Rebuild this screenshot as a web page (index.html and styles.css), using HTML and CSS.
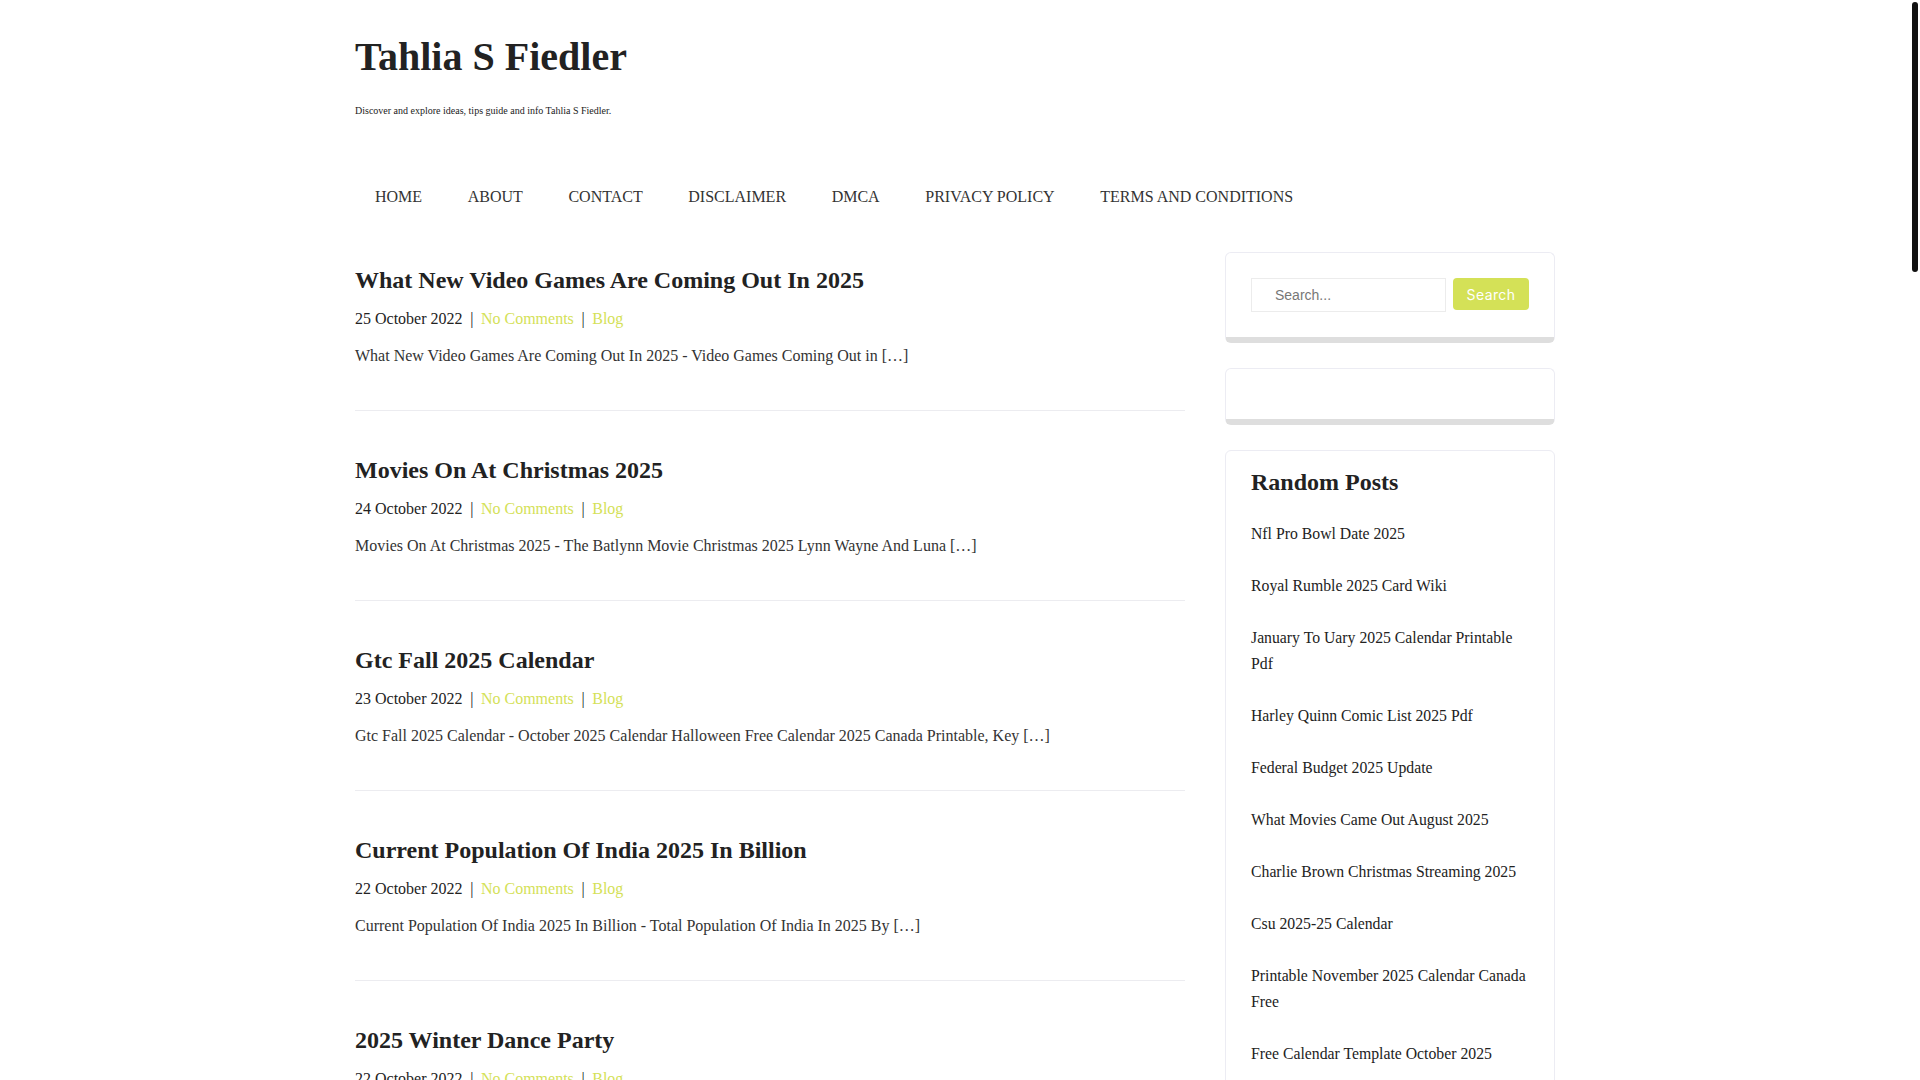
FILE: index.html
```html
<!DOCTYPE html>
<html lang="en">
<head>
    <meta charset="UTF-8">
    <meta name="viewport" content="width=device-width, initial-scale=1.0">
    <title>Tahlia S Fiedler</title>
    <link rel="stylesheet" href="styles.css">
</head>
<body>
    <div class="scroll-thumb"></div>
    <div class="wrap">
        <header class="site-header">
            <h1 class="site-title"><a href="#">Tahlia S Fiedler</a></h1>
            <p class="site-desc">Discover and explore ideas, tips guide and info Tahlia S Fiedler.</p>
            <nav class="menu">
                <ul>
                    <li><a href="#">HOME</a></li>
                    <li><a href="#">ABOUT</a></li>
                    <li><a href="#">CONTACT</a></li>
                    <li><a href="#">DISCLAIMER</a></li>
                    <li><a href="#">DMCA</a></li>
                    <li><a href="#">PRIVACY POLICY</a></li>
                    <li><a href="#">TERMS AND CONDITIONS</a></li>
                </ul>
            </nav>
        </header>

        <div class="content">
            <main class="posts">
                <article class="post">
                    <h2><a href="#">What New Video Games Are Coming Out In 2025</a></h2>
                    <div class="meta">25 October 2022<span class="sep">|</span><a href="#">No Comments</a><span class="sep">|</span><a href="#">Blog</a></div>
                    <p>What New Video Games Are Coming Out In 2025 - Video Games Coming Out in […]</p>
                </article>
                <article class="post">
                    <h2><a href="#">Movies On At Christmas 2025</a></h2>
                    <div class="meta">24 October 2022<span class="sep">|</span><a href="#">No Comments</a><span class="sep">|</span><a href="#">Blog</a></div>
                    <p>Movies On At Christmas 2025 - The Batlynn Movie Christmas 2025 Lynn Wayne And Luna […]</p>
                </article>
                <article class="post">
                    <h2><a href="#">Gtc Fall 2025 Calendar</a></h2>
                    <div class="meta">23 October 2022<span class="sep">|</span><a href="#">No Comments</a><span class="sep">|</span><a href="#">Blog</a></div>
                    <p>Gtc Fall 2025 Calendar - October 2025 Calendar Halloween Free Calendar 2025 Canada Printable, Key […]</p>
                </article>
                <article class="post">
                    <h2><a href="#">Current Population Of India 2025 In Billion</a></h2>
                    <div class="meta">22 October 2022<span class="sep">|</span><a href="#">No Comments</a><span class="sep">|</span><a href="#">Blog</a></div>
                    <p>Current Population Of India 2025 In Billion - Total Population Of India In 2025 By […]</p>
                </article>
                <article class="post">
                    <h2><a href="#">2025 Winter Dance Party</a></h2>
                    <div class="meta">22 October 2022<span class="sep">|</span><a href="#">No Comments</a><span class="sep">|</span><a href="#">Blog</a></div>
                    <p>2025 Winter Dance Party - Winter Dance Party 2025 Tickets And Tour Dates […]</p>
                </article>
                <article class="post">
                    <h2><a href="#">Nfl Pro Bowl Date 2025</a></h2>
                    <div class="meta">21 October 2022<span class="sep">|</span><a href="#">No Comments</a><span class="sep">|</span><a href="#">Blog</a></div>
                    <p>Nfl Pro Bowl Date 2025 - Pro Bowl 2025 Date, Time And Location […]</p>
                </article>
                <article class="post">
                    <h2><a href="#">Royal Rumble 2025 Card Wiki</a></h2>
                    <div class="meta">21 October 2022<span class="sep">|</span><a href="#">No Comments</a><span class="sep">|</span><a href="#">Blog</a></div>
                    <p>Royal Rumble 2025 Card Wiki - Royal Rumble 2025 Match Card And Results […]</p>
                </article>
                <article class="post">
                    <h2><a href="#">Federal Budget 2025 Update</a></h2>
                    <div class="meta">20 October 2022<span class="sep">|</span><a href="#">No Comments</a><span class="sep">|</span><a href="#">Blog</a></div>
                    <p>Federal Budget 2025 Update - Budget 2025 What You Need To Know […]</p>
                </article>
                <article class="post">
                    <h2><a href="#">What Movies Came Out August 2025</a></h2>
                    <div class="meta">20 October 2022<span class="sep">|</span><a href="#">No Comments</a><span class="sep">|</span><a href="#">Blog</a></div>
                    <p>What Movies Came Out August 2025 - New Movies August 2025 Release Dates […]</p>
                </article>
                <article class="post">
                    <h2><a href="#">Charlie Brown Christmas Streaming 2025</a></h2>
                    <div class="meta">19 October 2022<span class="sep">|</span><a href="#">No Comments</a><span class="sep">|</span><a href="#">Blog</a></div>
                    <p>Charlie Brown Christmas Streaming 2025 - Where To Watch A Charlie Brown Christmas […]</p>
                </article>
                <article class="post">
                    <h2><a href="#">Csu 2025-25 Calendar</a></h2>
                    <div class="meta">19 October 2022<span class="sep">|</span><a href="#">No Comments</a><span class="sep">|</span><a href="#">Blog</a></div>
                    <p>Csu 2025-25 Calendar - Academic Calendar 2025 Csu Important Dates […]</p>
                </article>
                <article class="post">
                    <h2><a href="#">Printable November 2025 Calendar Canada Free</a></h2>
                    <div class="meta">18 October 2022<span class="sep">|</span><a href="#">No Comments</a><span class="sep">|</span><a href="#">Blog</a></div>
                    <p>Printable November 2025 Calendar Canada Free - November 2025 Calendar With Holidays […]</p>
                </article>
                <article class="post">
                    <h2><a href="#">Free Calendar Template October 2025</a></h2>
                    <div class="meta">18 October 2022<span class="sep">|</span><a href="#">No Comments</a><span class="sep">|</span><a href="#">Blog</a></div>
                    <p>Free Calendar Template October 2025 - October 2025 Calendar Printable Template […]</p>
                </article>
                <article class="post">
                    <h2><a href="#">Harley Quinn Comic List 2025 Pdf</a></h2>
                    <div class="meta">17 October 2022<span class="sep">|</span><a href="#">No Comments</a><span class="sep">|</span><a href="#">Blog</a></div>
                    <p>Harley Quinn Comic List 2025 Pdf - Harley Quinn Comics Reading Order […]</p>
                </article>
                <article class="post">
                    <h2><a href="#">January To Uary 2025 Calendar Printable Pdf</a></h2>
                    <div class="meta">17 October 2022<span class="sep">|</span><a href="#">No Comments</a><span class="sep">|</span><a href="#">Blog</a></div>
                    <p>January To Uary 2025 Calendar Printable Pdf - Printable Calendar 2025 Monthly […]</p>
                </article>
                <article class="post">
                    <h2><a href="#">Best Family Cars 2025</a></h2>
                    <div class="meta">16 October 2022<span class="sep">|</span><a href="#">No Comments</a><span class="sep">|</span><a href="#">Blog</a></div>
                    <p>Best Family Cars 2025 - Top Family Cars For 2025 Reviewed […]</p>
                </article>
                <article class="post">
                    <h2><a href="#">Easter Sunday 2025 Date</a></h2>
                    <div class="meta">16 October 2022<span class="sep">|</span><a href="#">No Comments</a><span class="sep">|</span><a href="#">Blog</a></div>
                    <p>Easter Sunday 2025 Date - When Is Easter 2025 Calendar […]</p>
                </article>
                <article class="post">
                    <h2><a href="#">Super Bowl 2025 Halftime Show</a></h2>
                    <div class="meta">15 October 2022<span class="sep">|</span><a href="#">No Comments</a><span class="sep">|</span><a href="#">Blog</a></div>
                    <p>Super Bowl 2025 Halftime Show - Halftime Show Performers 2025 […]</p>
                </article>
                <article class="post">
                    <h2><a href="#">School Holidays 2025 Calendar</a></h2>
                    <div class="meta">15 October 2022<span class="sep">|</span><a href="#">No Comments</a><span class="sep">|</span><a href="#">Blog</a></div>
                    <p>School Holidays 2025 Calendar - School Term Dates 2025 Printable […]</p>
                </article>
                <article class="post">
                    <h2><a href="#">Lunar New Year 2025 Animal</a></h2>
                    <div class="meta">14 October 2022<span class="sep">|</span><a href="#">No Comments</a><span class="sep">|</span><a href="#">Blog</a></div>
                    <p>Lunar New Year 2025 Animal - Year Of The Snake 2025 Meaning […]</p>
                </article>

                <div class="pager">
                    <a href="#" class="current">1</a>
                    <a href="#">2</a>
                    <a href="#">3</a>
                    <a href="#">Next</a>
                </div>
            </main>

            <aside class="sidebar">
                <div class="widget">
                    <form class="search">
                        <input type="text" placeholder="Search...">
                        <button type="button">Search</button>
                    </form>
                </div>
                <div class="widget"></div>
                <div class="widget random">
                    <h3>Random Posts</h3>
                    <ul>
                        <li><a href="#">Nfl Pro Bowl Date 2025</a></li>
                        <li><a href="#">Royal Rumble 2025 Card Wiki</a></li>
                        <li><a href="#">January To Uary 2025 Calendar Printable Pdf</a></li>
                        <li><a href="#">Harley Quinn Comic List 2025 Pdf</a></li>
                        <li><a href="#">Federal Budget 2025 Update</a></li>
                        <li><a href="#">What Movies Came Out August 2025</a></li>
                        <li><a href="#">Charlie Brown Christmas Streaming 2025</a></li>
                        <li><a href="#">Csu 2025-25 Calendar</a></li>
                        <li><a href="#">Printable November 2025 Calendar Canada Free</a></li>
                        <li><a href="#">Free Calendar Template October 2025</a></li>
                    </ul>
                </div>
            </aside>
        </div>
    </div>

    <footer class="site-footer">
        <p>Copyright &copy; 2022 Tahlia S Fiedler. All rights reserved.</p>
    </footer>
</body>
</html>
```

FILE: styles.css
```css
*{
    padding: 0;
    margin: 0;
    box-sizing: border-box;
}
body{
    font-family: "Liberation Serif", "Times New Roman", serif;
    font-size: 16px;
    color: #222;
    background: #fff;
    padding-right: 10px;
}
/* page scroll indicator */
.scroll-thumb{
    position: fixed;
    top: 2px;
    right: 2px;
    width: 6px;
    height: 270px;
    border-radius: 3px;
    background: #111;
}
a{
    color: inherit;
    text-decoration: none;
}
ul{
    list-style: none;
}
.wrap{
    width: 1200px;
    margin: 0 auto;
}
.site-header{
    padding-top: 33px;
}
.site-title{
    font-size: 40px;
    line-height: 48px;
    font-weight: bold;
    color: #222;
}
.site-desc{
    margin-top: 22px;
    font-size: 10px;
    line-height: 15px;
    color: #222;
}
.menu{
    margin-top: 67px;
}
.menu ul{
    display: flex;
    gap: 5.6px;
}
.menu li a{
    display: block;
    padding: 0 20px;
    line-height: 24px;
    color: #333;
}
.content{
    display: flex;
    gap: 40px;
    margin-top: 43px;
}
.posts{
    flex: 1;
}
.post{
    padding: 13px 0 42px;
    border-bottom: 1px solid #ececf0;
    margin-bottom: 31px;
}
.post h2{
    font-size: 24px;
    line-height: 30px;
    font-weight: bold;
    color: #222;
}
.post .meta{
    margin-top: 12px;
    line-height: 24px;
    color: #222;
}
.post .meta a{
    color: #d4e157;
}
.post .meta .sep{
    margin: 0 7.6px;
}
.post p{
    margin-top: 13px;
    line-height: 24px;
    color: #333;
}
.pager{
    display: flex;
    gap: 8px;
    padding: 10px 0 40px;
}
.pager a{
    padding: 6px 12px;
    border: 1px solid #ececf0;
    border-radius: 4px;
}
.pager .current{
    background: #d4e157;
    color: #fff;
}
.sidebar{
    width: 330px;
}
.widget{
    min-height: 57px;
    padding: 25px;
    border: 1px solid #ececf3;
    border-bottom: 6px solid #dedede;
    border-radius: 6px;
    margin-bottom: 25px;
}
.search{
    display: flex;
    align-items: flex-start;
    gap: 7px;
}
.search input{
    width: 195px;
    height: 34px;
    padding-left: 23px;
    border: 1px solid #ececec;
    font-family: "Liberation Sans", Arial, sans-serif;
    font-size: 14px;
    color: #333;
    outline: none;
}
.search input::placeholder{
    color: #777;
}
.search button{
    width: 76px;
    height: 32px;
    border: none;
    border-radius: 4px;
    background: #d4e157;
    color: #fff;
    font-family: Inter, "Liberation Sans", sans-serif;
    font-size: 14px;
    letter-spacing: 0.4px;
}
.random{
    padding: 17px 25px 25px;
    border-bottom: 1px solid #ececf3;
}
.random h3{
    font-size: 24px;
    line-height: 29px;
    font-weight: bold;
    color: #222;
    margin-bottom: 11px;
}
.random li{
    padding: 13px 0;
    font-size: 15.75px;
    line-height: 26px;
    color: #222;
}
.site-footer{
    margin-top: 20px;
    padding: 40px 0;
    border-top: 1px solid #ececf0;
    text-align: center;
    font-size: 14px;
    color: #555;
}
```
